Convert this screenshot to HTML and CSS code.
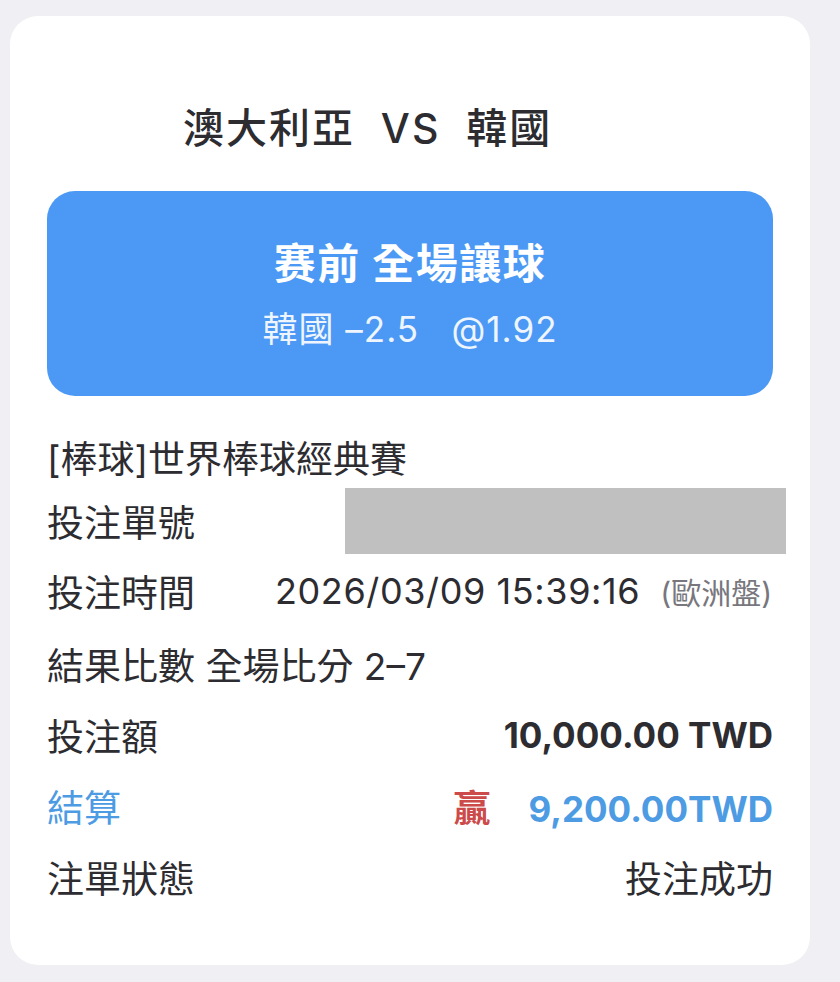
FILE: index.html
```html
<!DOCTYPE html>
<html>
<head>
    <link rel="stylesheet" href="styles.css">
</head>
<body>
    <div class="card">
        <h1 class="match">澳大利亞&nbsp;&nbsp;VS&nbsp;&nbsp;韓國</h1>

        <div class="betBox">
            <div class="betType">赛前 全場讓球</div>
            <div class="betPick">韓國 –2.5 &nbsp;&nbsp;@1.92</div>
        </div>

        <div class="row league">[棒球]世界棒球經典賽</div>

        <div class="row orderNo">
            <span>投注單號</span>
            <div class="mask"></div>
        </div>

        <div class="row time">
            <span>投注時間</span>
            <span class="timeValue">2026/03/09 15:39:16</span>
            <span class="oddsType">(歐洲盤)</span>
        </div>

        <div class="row">結果比數 全場比分 2–7</div>

        <div class="row split">
            <span>投注額</span>
            <span class="amount">10,000.00 TWD</span>
        </div>

        <div class="row split settle">
            <span>結算</span>
            <span class="settleValue"><span class="win">贏</span><span class="payout">9,200.00TWD</span></span>
        </div>

        <div class="row split">
            <span>注單狀態</span>
            <span>投注成功</span>
        </div>
    </div>
</body>
</html>
```

FILE: styles.css
```css
body {
    margin: 0;
    padding: 16px 0 0 10px;
    background-color: #efeff4;
    font-family: 'Inter', 'Noto Sans CJK TC', sans-serif;
    color: #2c2c31;
}
.card {
    width: 800px;
    height: 949px;
    box-sizing: border-box;
    padding: 88px 37px 0 37px;
    background: #ffffff;
    border-radius: 28px;
}
.match {
    margin: 0 0 39px 136px;
    font-size: 41px;
    font-weight: 500;
    line-height: 48px;
    letter-spacing: 2px;
}
.betBox {
    height: 205px;
    background-color: #4b99f4;
    border-radius: 28px;
    color: #ffffff;
    display: flex;
    flex-direction: column;
    align-items: center;
    justify-content: center;
    gap: 20px;
    margin-bottom: 30px;
}
.betType {
    font-size: 42px;
    font-weight: 700;
    line-height: 48px;
    letter-spacing: 1.5px;
    margin-top: 2px;
}
.betPick {
    font-size: 35px;
    line-height: 42px;
    letter-spacing: 1px;
    color: #eef5ff;
}
.row {
    height: 71px;
    display: flex;
    align-items: center;
    font-size: 37px;
    white-space: nowrap;
}
.league {
    height: 62px;
}
.orderNo {
    height: 66px;
    align-items: stretch;
}
.orderNo span {
    align-self: center;
}
.mask {
    width: 441px;
    margin-left: auto;
    margin-right: -13px;
    background-color: #c0c0c0;
}
.time {
    height: 74px;
}
.timeValue {
    margin-left: 80px;
    font-size: 36px;
    letter-spacing: 0.6px;
}
.oddsType {
    margin-left: 20px;
    font-size: 30px;
    color: #77777d;
}
.split {
    justify-content: space-between;
}
.amount {
    font-size: 35px;
    font-weight: 700;
}
.settle {
    color: #4d9be3;
}
.win {
    color: #cc4a4a;
    font-weight: 700;
    margin-right: 38px;
}
.payout {
    font-size: 35px;
    font-weight: 700;
}
```
